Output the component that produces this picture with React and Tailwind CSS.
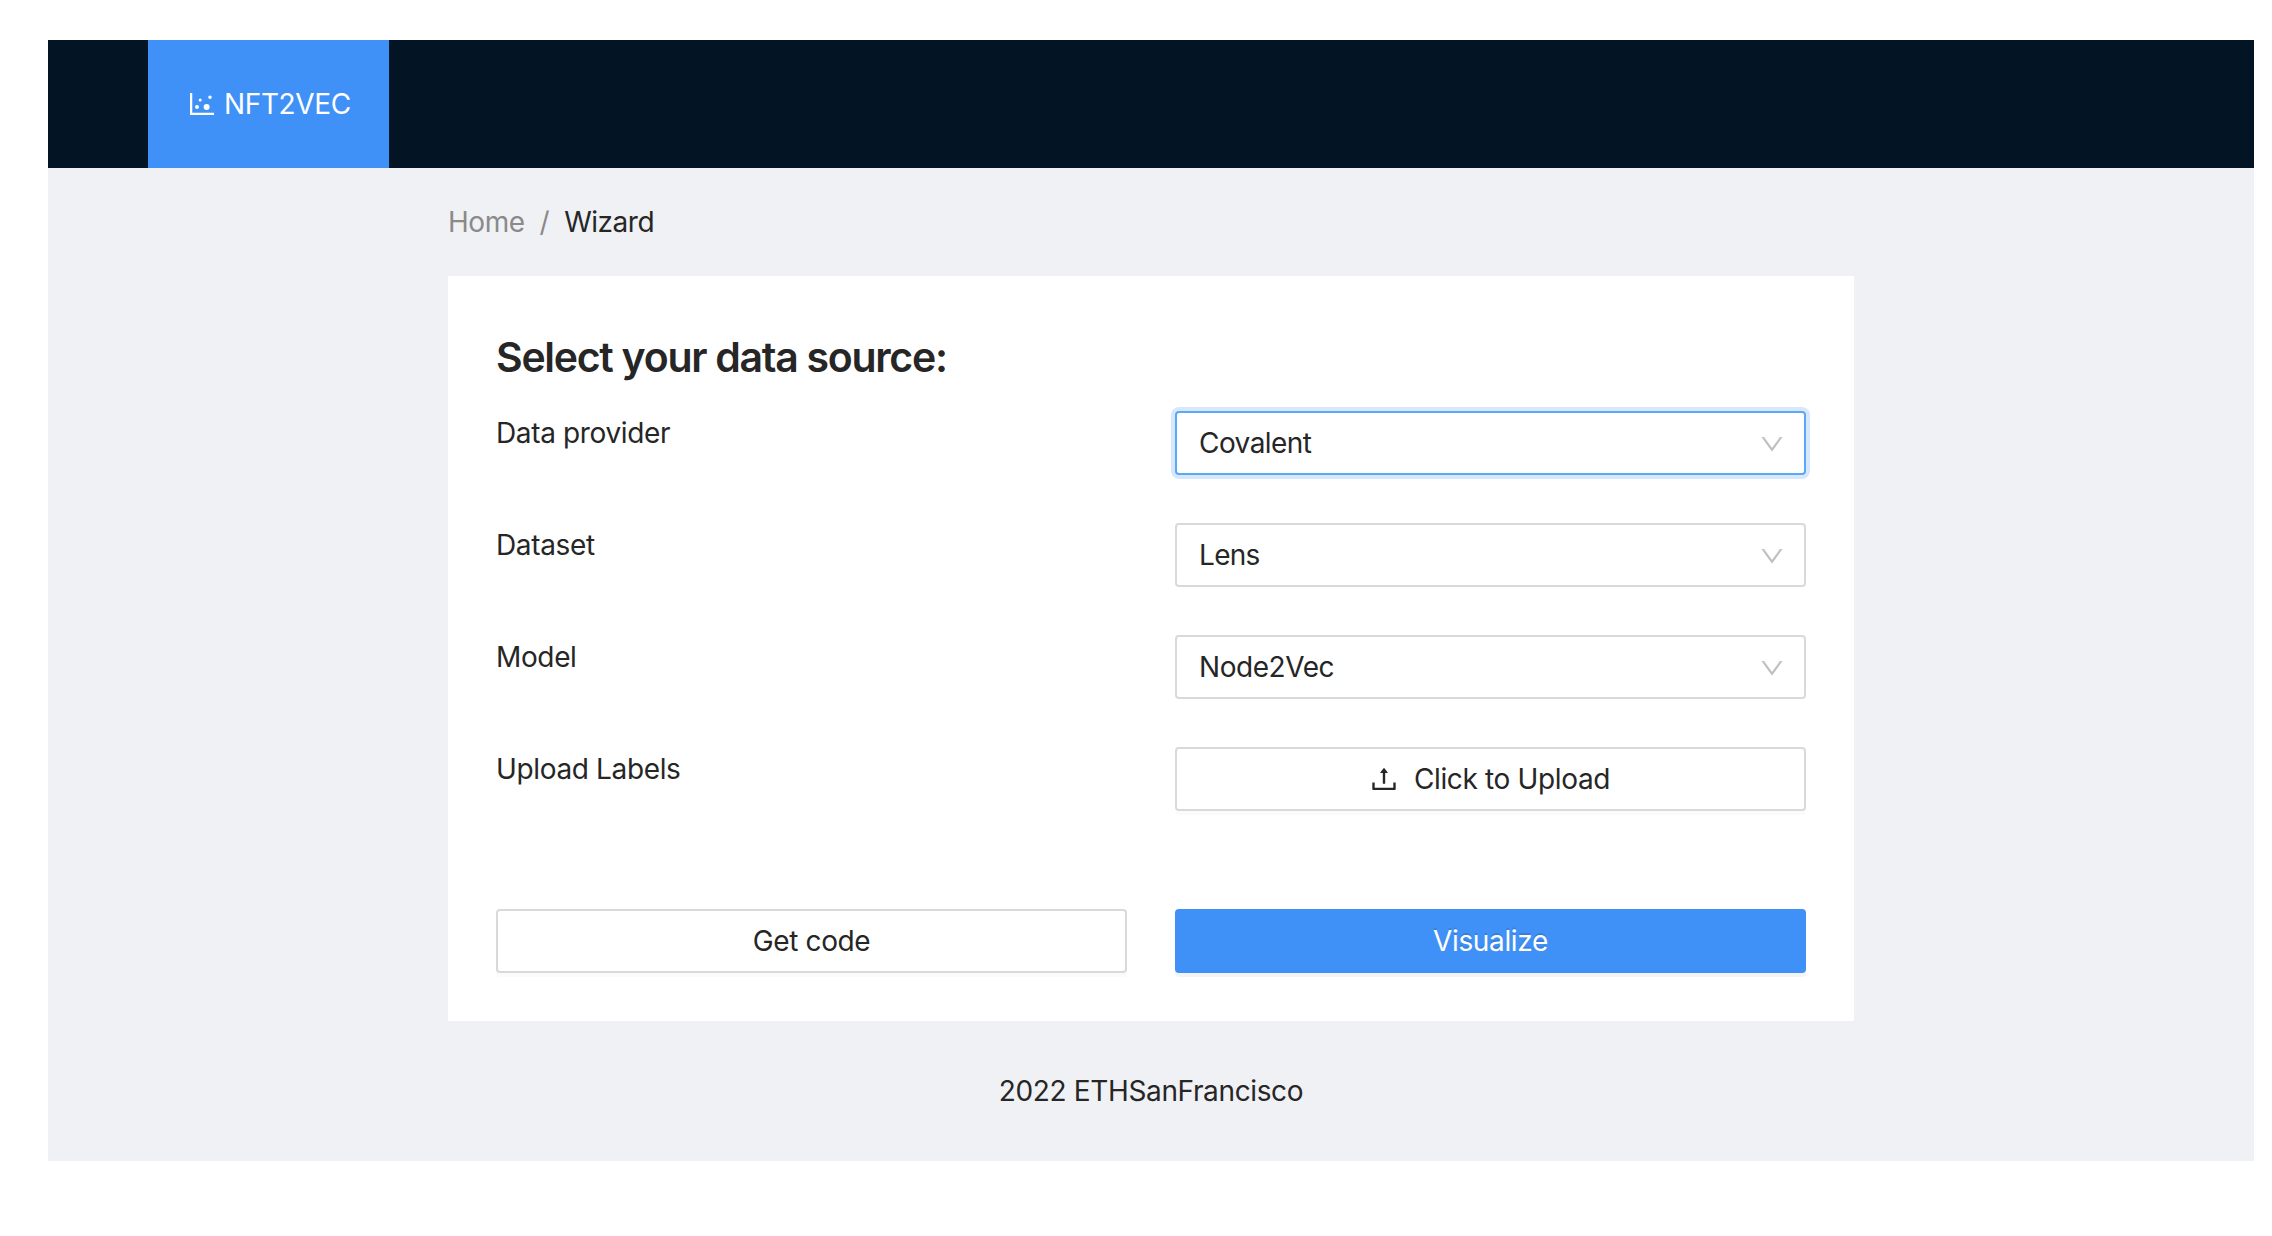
import { AiOutlineDotChart, AiOutlineDown, AiOutlineUpload } from "react-icons/ai";

const fields = [
  { label: "Data provider", value: "Covalent", focused: true, tracking: "tracking-[-0.55px]" },
  { label: "Dataset", value: "Lens", tracking: "tracking-[-0.7px]" },
  { label: "Model", value: "Node2Vec", tracking: "tracking-[-0.45px]" },
];

function Select({ value, focused, tracking }) {
  const frame = focused
    ? "border-[#5aa8f8] shadow-[0_0_0_4px_#d8e8fc]"
    : "border-[#d9d9d9]";
  return (
    <button
      className={`flex h-16 w-full items-center justify-between rounded-[4px] border-2 bg-white pr-[18px] pl-[22px] ${frame}`}
    >
      <span className={tracking}>{value}</span>
      <AiOutlineDown className="mt-px size-7 text-[#bfbfbf]" />
    </button>
  );
}

function Button({ children, primary }) {
  const look = primary
    ? "border-[#4091f7] bg-[#4091f7] text-white shadow-[0_4px_0_rgba(0,0,0,0.045)] [text-shadow:0_-2px_0_rgba(0,0,0,0.12)]"
    : "border-[#d9d9d9] bg-white shadow-[0_4px_0_rgba(0,0,0,0.016)]";
  return (
    <button className={`flex h-16 w-full items-center justify-center rounded-[4px] border-2 ${look}`}>
      {children}
    </button>
  );
}

function Row({ label, children }) {
  return (
    <div className="grid h-28 grid-cols-2 items-start gap-12">
      <div>{label}</div>
      {children}
    </div>
  );
}

export default function App() {
  return (
    <div className="min-h-[1236px] bg-white pt-10 pr-[18px] pl-12">
      <div className="bg-[#f0f1f5] font-['Inter',sans-serif] text-[28px] leading-[44px] tracking-[-0.36px] text-[#262626]">
        <header className="flex h-32 bg-[#031425] pl-[100px]">
          <a className="flex w-[241px] items-center gap-1.5 bg-[#4091f7] pl-[38px] text-white">
            <AiOutlineDotChart className="size-8 shrink-0" />
            <span>NFT2VEC</span>
          </a>
        </header>

        <main className="mx-auto w-[1406px]">
          <nav className="flex gap-[15px] py-8 tracking-[-0.48px]">
            <span className="text-[#8a8a8b]">Home</span>
            <span className="text-[#8a8a8b]">/</span>
            <span>Wizard</span>
          </nav>

          <section className="bg-white px-12 pt-[53px] pb-12">
            <h4 className="mb-[26px] text-[41px] leading-[56px] font-semibold tracking-[-1.28px]">
              Select your data source:
            </h4>
            {fields.map((field) => (
              <Row key={field.label} label={field.label}>
                <Select {...field} />
              </Row>
            ))}
            <Row label="Upload Labels">
              <Button>
                <AiOutlineUpload className="mr-3.5 size-8" />
                <span className="mr-[3px]">Click to Upload</span>
              </Button>
            </Row>
            <div className="mt-[50px] grid grid-cols-2 gap-12">
              <Button>Get code</Button>
              <Button primary>Visualize</Button>
            </div>
          </section>
        </main>

        <footer className="p-12 text-center">2022 ETHSanFrancisco</footer>
      </div>
    </div>
  );
}
